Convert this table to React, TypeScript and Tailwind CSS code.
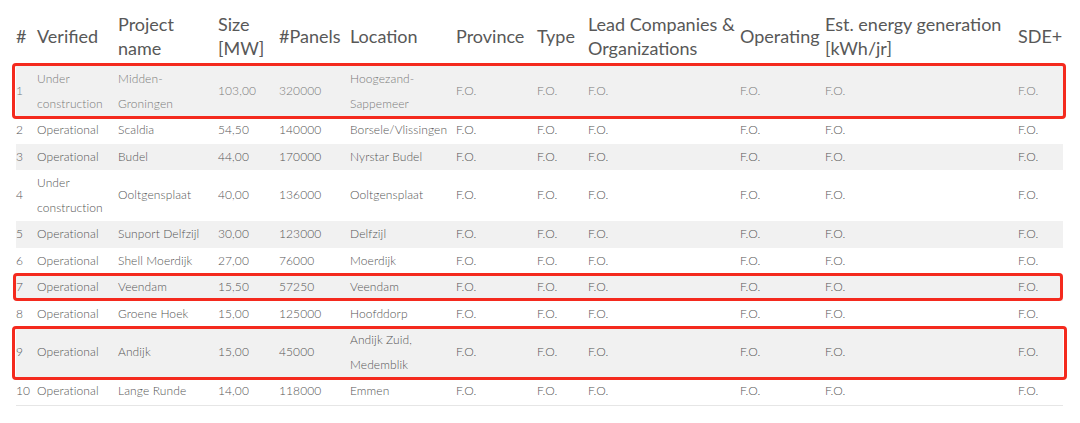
import React from "react";

type Row = {
  n: number;
  verified: React.ReactNode;
  name: React.ReactNode;
  size: string;
  panels: string;
  location: React.ReactNode;
  striped: boolean;
  light?: boolean;
};

const rows: Row[] = [
  { n: 1, verified: <>Under<br />construction</>, name: <>Midden-<br />Groningen</>, size: "103,00", panels: "320000", location: <>Hoogezand-<br />Sappemeer</>, striped: true, light: true },
  { n: 2, verified: "Operational", name: "Scaldia", size: "54,50", panels: "140000", location: "Borsele/Vlissingen", striped: false },
  { n: 3, verified: "Operational", name: "Budel", size: "44,00", panels: "170000", location: "Nyrstar Budel", striped: true },
  { n: 4, verified: <>Under<br />construction</>, name: "Ooltgensplaat", size: "40,00", panels: "136000", location: "Ooltgensplaat", striped: false },
  { n: 5, verified: "Operational", name: "Sunport Delfzijl", size: "30,00", panels: "123000", location: "Delfzijl", striped: true },
  { n: 6, verified: "Operational", name: "Shell Moerdijk", size: "27,00", panels: "76000", location: "Moerdijk", striped: false },
  { n: 7, verified: "Operational", name: "Veendam", size: "15,50", panels: "57250", location: "Veendam", striped: true },
  { n: 8, verified: "Operational", name: "Groene Hoek", size: "15,00", panels: "125000", location: "Hoofddorp", striped: false },
  { n: 9, verified: "Operational", name: "Andijk", size: "15,00", panels: "45000", location: <>Andijk Zuid,<br />Medemblik</>, striped: true },
  { n: 10, verified: "Operational", name: "Lange Runde", size: "14,00", panels: "118000", location: "Emmen", striped: false },
];

const widths = [21, 81, 100, 61, 71, 106, 81, 51, 152, 85, 193, 45];

export default function App() {
  return (
    <div
      className="relative w-[1080px] h-[423px] bg-white overflow-hidden"
      style={{ fontFamily: "Lato, 'Open Sans', sans-serif" }}
    >
      <div className="pl-[16px] pt-[10px]">
        <table className="table-fixed border-collapse w-[1047px]">
          <colgroup>
            {widths.map((w, i) => (
              <col key={i} style={{ width: w }} />
            ))}
          </colgroup>
          <thead>
            <tr className="text-[18px] leading-[24px] text-[#585858] text-left align-middle">
              {[
                "#",
                "Verified",
                <>Project<br />name</>,
                <>Size<br />[MW]</>,
                "#Panels",
                "Location",
                "Province",
                "Type",
                <>Lead Companies &amp;<br />Organizations</>,
                "Operating",
                <>Est. energy generation<br />[kWh/jr]</>,
                "SDE+",
              ].map((h, i) => (
                <th key={i} className="font-normal p-0 pt-[2px] pb-[6px] whitespace-nowrap">
                  {h}
                </th>
              ))}
            </tr>
          </thead>
          <tbody>
            {rows.map((r, idx) => (
              <tr
                key={r.n}
                className={`${r.striped ? "bg-[#f1f1f1]" : "bg-white"} ${r.light ? "text-[#7a7a7a]" : "text-[#555555]"} ${idx === rows.length - 1 ? "border-b border-[#e6e6e6]" : ""} text-[12px] font-light tracking-[0.1px] leading-[24.5px] align-middle`}
              >
                {[
                  String(r.n),
                  r.verified,
                  r.name,
                  r.size,
                  r.panels,
                  r.location,
                  "F.O.",
                  "F.O.",
                  "F.O.",
                  "F.O.",
                  "F.O.",
                  "F.O.",
                ].map((c, i) => (
                  <td key={i} className="p-0 py-[1px] whitespace-nowrap overflow-visible">
                    {c}
                  </td>
                ))}
              </tr>
            ))}
          </tbody>
        </table>
      </div>

      <div className="absolute left-[12px] top-[63px] w-[1054px] h-[56px] border-[3px] border-[#f42a1e] rounded-[4px] pointer-events-none" />
      <div className="absolute left-[13px] top-[273px] w-[1050px] h-[28px] border-[3px] border-[#f42a1e] rounded-[4px] pointer-events-none" />
      <div className="absolute left-[12px] top-[326px] w-[1055px] h-[54px] border-[3px] border-[#f42a1e] rounded-[4px] pointer-events-none" />
    </div>
  );
}
